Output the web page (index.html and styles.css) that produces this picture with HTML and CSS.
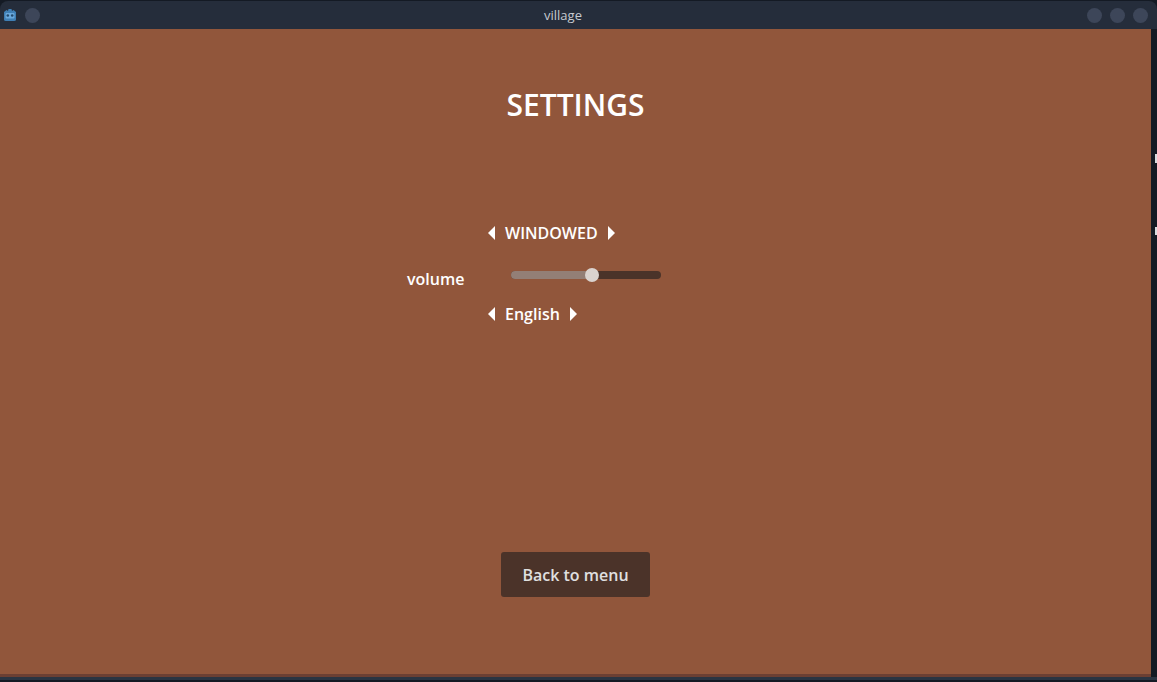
FILE: index.html
```html
<!DOCTYPE html>
<html lang="en">
<head>
<meta charset="utf-8">
<title>village</title>
<link rel="stylesheet" href="styles.css">
</head>
<body>
<div class="window">
  <header class="titlebar">
    <div class="tb-left">
      <svg class="app-icon" width="14" height="14" viewBox="0 0 14 14" aria-hidden="true">
        <path d="M1 4 L3.500 2 L5 3 L5.500 1 L8.500 1 L9 3 L10.500 2 L13 4 L13 11.500 Q13 13 11 13 L3 13 Q1 13 1 11.500 Z" fill="#3f7fb5"/>
        <rect x="2.500" y="5" width="9" height="5.500" rx="1" fill="#6aa9dd"/>
        <circle cx="4.800" cy="7.500" r="1.300" fill="#234a6e"/>
        <circle cx="9.200" cy="7.500" r="1.300" fill="#234a6e"/>
      </svg>
      <span class="tb-btn"></span>
    </div>
    <div class="tb-title">village</div>
    <div class="tb-right">
      <span class="tb-btn"></span>
      <span class="tb-btn"></span>
      <span class="tb-btn"></span>
    </div>
  </header>
  <div class="body-row">
    <main class="game">
      <h1 class="heading">SETTINGS</h1>
      <div class="settings">
        <div class="cell-control selector">
          <span class="arrow arrow-left"></span>
          <span class="value">WINDOWED</span>
          <span class="arrow arrow-right"></span>
        </div>
        <div class="label">volume</div>
        <div class="slider">
          <div class="slider-fill"></div>
          <div class="slider-knob"></div>
        </div>
        <div class="cell-control selector selector-last">
          <span class="arrow arrow-left"></span>
          <span class="value">English</span>
          <span class="arrow arrow-right"></span>
        </div>
      </div>
      <button class="back" type="button">Back to menu</button>
    </main>
    <aside class="edge">
      <span class="edge-mark edge-mark-a"></span>
      <span class="edge-mark edge-mark-b"></span>
    </aside>
  </div>
  <div class="game-bottom"></div>
  <div class="frame-bottom"></div>
</div>
</body>
</html>
```
FILE: styles.css
```css
html, body {
  margin: 0;
  padding: 0;
  height: 100%;
  background: #141a24;
}
body {
  width: 1157px;
  height: 682px;
  overflow: hidden;
  font-family: "Open Sans", "Noto Sans", sans-serif;
}
.window {
  display: flex;
  flex-direction: column;
  height: 682px;
}
.titlebar {
  height: 28px;
  margin-top: 1px;
  flex: none;
  display: grid;
  grid-template-columns: 1fr auto 1fr;
  align-items: center;
  background: #252d3b;
  border-radius: 8px 8px 0 0;
  color: #c6cad0;
  font-size: 13px;
}
.tb-left {
  display: flex;
  align-items: center;
  gap: 8px;
  padding-left: 3px;
}
.tb-right {
  display: flex;
  justify-content: flex-end;
  gap: 8px;
  padding-right: 9px;
}
.tb-title {
  line-height: 28px;
  padding-right: 31px;
}
.tb-btn {
  display: block;
  width: 15px;
  height: 15px;
  border-radius: 50%;
  background: #3d4659;
}
.app-icon {
  display: block;
}
.body-row {
  display: flex;
  height: 645px;
  flex: none;
}
.game {
  width: 1151px;
  flex: none;
  background: #91563b;
  display: flex;
  flex-direction: column;
  align-items: center;
  color: #fff;
}
.edge {
  flex: 1;
  position: relative;
}
.edge-mark {
  position: absolute;
  left: 4px;
  width: 2px;
  background: #d8dade;
}
.edge-mark-a {
  top: 125px;
  height: 9px;
}
.edge-mark-b {
  top: 198px;
  height: 8px;
}
.heading {
  margin: 55px 0 0;
  font-size: 30px;
  font-weight: 600;
  line-height: 41px;
}
.settings {
  margin-top: 97px;
  width: 337px;
  display: grid;
  grid-template-columns: 81px 1fr;
  font-size: 16px;
  font-weight: 600;
}
.cell-control {
  grid-column: 2;
}
.selector {
  display: flex;
  align-items: center;
  height: 22px;
  line-height: 22px;
}
.selector-last {
  margin-top: 13px;
}
.value {
  margin: 0 10px;
}
.arrow {
  width: 0;
  height: 0;
  border-top: 7px solid transparent;
  border-bottom: 7px solid transparent;
}
.arrow-left {
  border-right: 7px solid #fff;
}
.arrow-right {
  border-left: 7px solid #fff;
}
.label {
  grid-column: 1;
  line-height: 22px;
  margin-top: 24px;
}
.slider {
  grid-column: 2;
  width: 150px;
  height: 8px;
  margin: 27px 0 0 23px;
  border-radius: 4px;
  background: #4b3329;
  position: relative;
}
.slider-fill {
  width: 81px;
  height: 8px;
  border-radius: 4px 0 0 4px;
  background: #937f76;
}
.slider-knob {
  position: absolute;
  left: 74px;
  top: -3px;
  width: 14px;
  height: 14px;
  border-radius: 50%;
  background: #dad3cf;
}
.back {
  margin-top: 227px;
  width: 149px;
  height: 45px;
  padding: 0;
  border: 0;
  border-radius: 3px;
  background: #4b3329;
  color: #e0e0e0;
  font: 600 16px "Open Sans", "Noto Sans", sans-serif;
}
.game-bottom {
  width: 1151px;
  height: 3px;
  flex: none;
  background: #6b3f33;
}
.frame-bottom {
  height: 3px;
  flex: none;
  background: #2a3442;
}
```
